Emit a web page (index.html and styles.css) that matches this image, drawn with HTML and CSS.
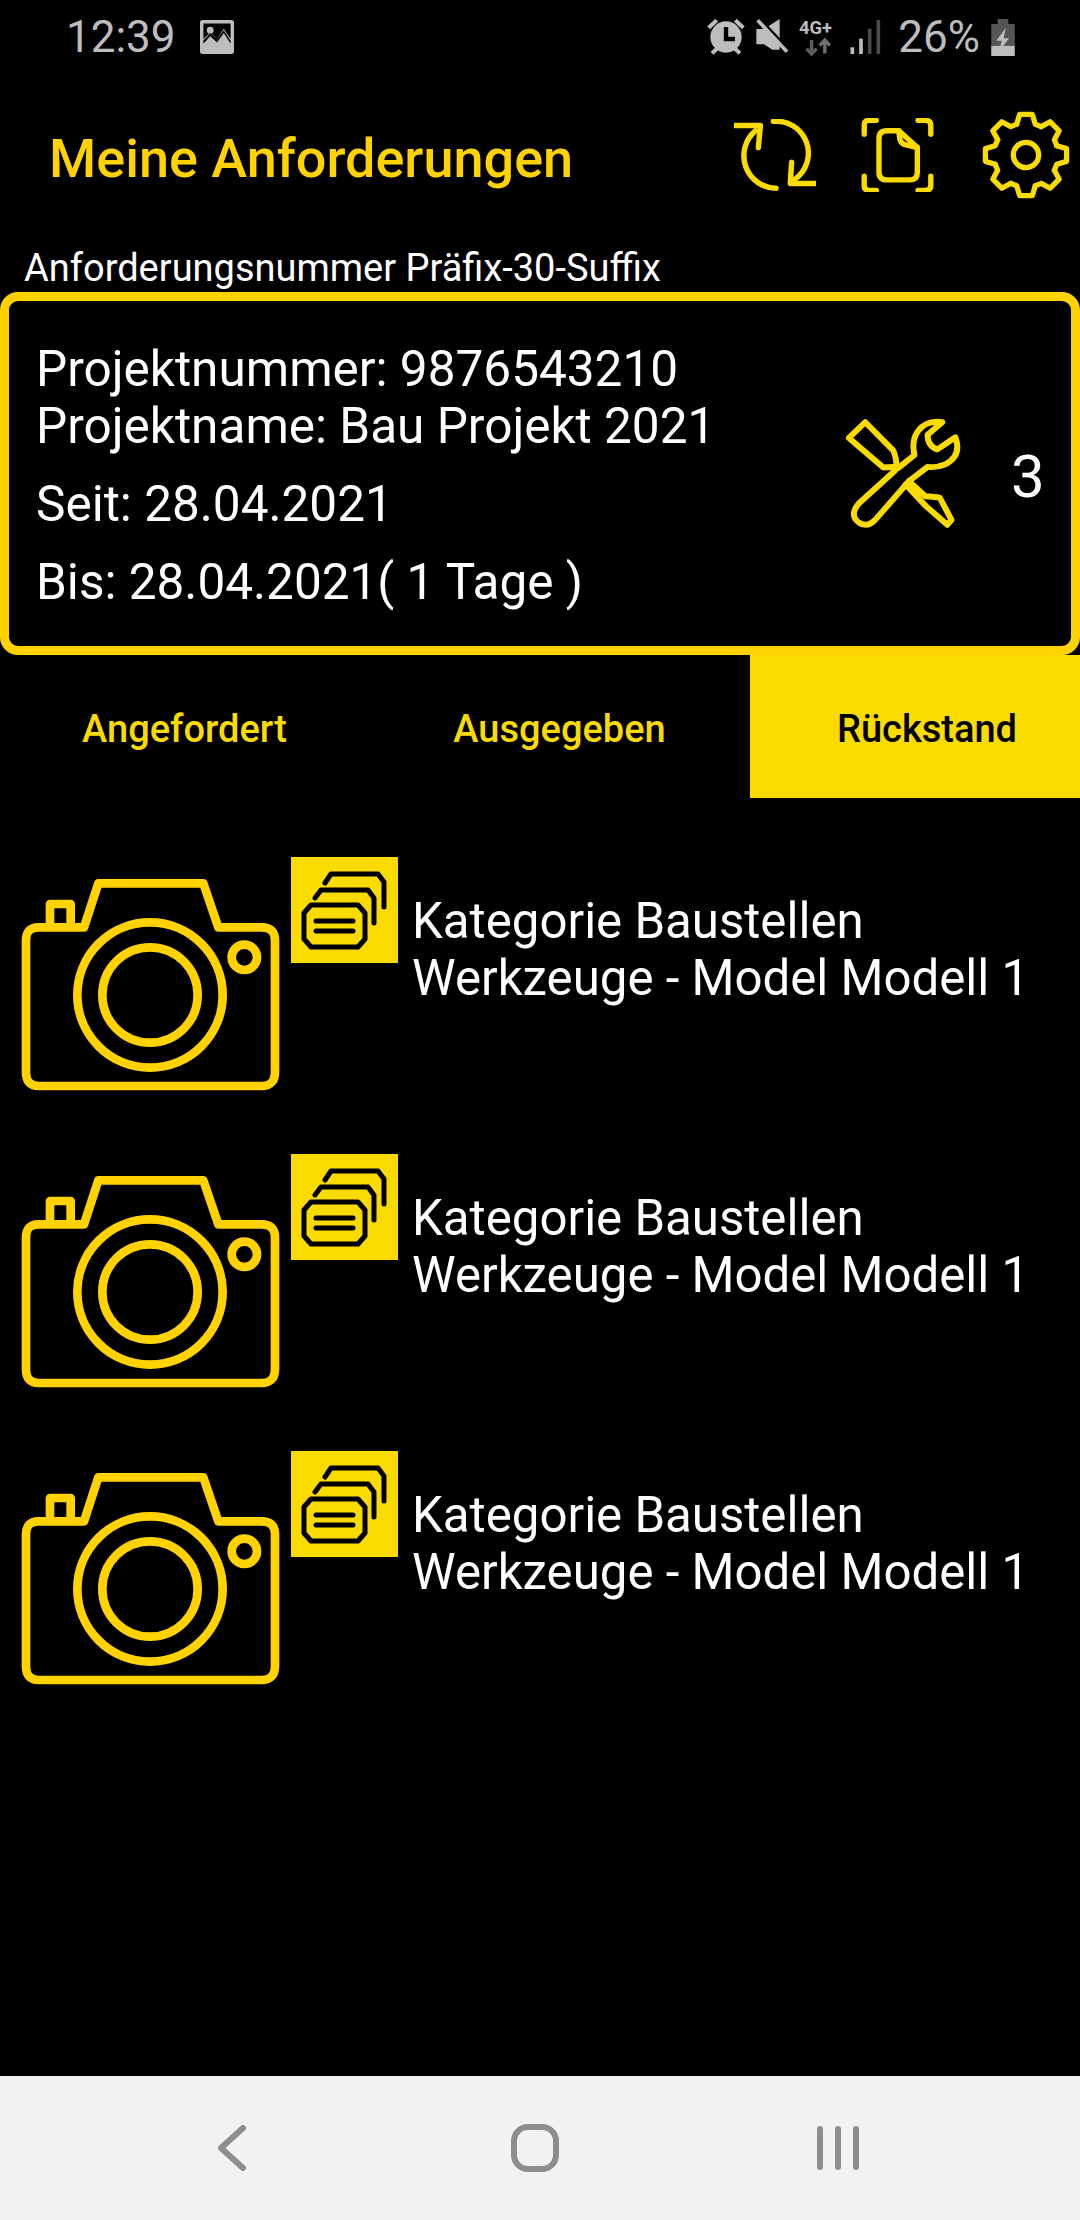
FILE: index.html
```html
<!DOCTYPE html>
<html lang="de">
<head>
    <meta charset="UTF-8">
    <meta name="viewport" content="width=device-width, initial-scale=1.0">
    <title>Meine Anforderungen</title>
    <link rel="stylesheet" href="styles.css">
</head>
<body>
    <div class="status-bar">
        <span class="status-time">12:39</span>
        <svg class="status-pic" width="34" height="34" viewBox="582 62 100 100">
            <path fill="#bdbdbd" fill-rule="evenodd" d="M590 62H674Q682 62 682 70V154Q682 162 674 162H590Q582 162 582 154V70Q582 62 590 62ZM592 72V118L612 98L632 118L652 88L672 118V72Z"/>
            <circle cx="612" cy="92" r="10" fill="#bdbdbd"/>
            <path fill="#000" d="M592 132L612 110L632 128L652 100L672 132V124L652 92L632 118L612 100L592 122Z"/>
        </svg>
        <div class="status-right">
            <svg width="38" height="36" viewBox="490 58 110 108">
                <circle cx="545" cy="112" r="47" fill="#bdbdbd"/>
                <path d="M545 82V118H572" fill="none" stroke="#000" stroke-width="13"/>
                <path d="M493 84L517 62M597 84L573 62M503 161L518 147M587 161L572 147" fill="none" stroke="#bdbdbd" stroke-width="12"/>
            </svg>
            <svg class="status-mute" width="34" height="36" viewBox="630 58 98 108">
                <path fill="#bdbdbd" d="M632 88H655L702 58V150L680 150L655 134H632Z"/>
                <path d="M646 62L728 150" stroke="#000" stroke-width="10"/>
                <path d="M636 62L724 156" stroke="#bdbdbd" stroke-width="11"/>
            </svg>
            <svg class="status-net" width="36" height="38" viewBox="757 60 104 112">
                <text class="net-label" x="756" y="106">4G+</text>
                <path d="M793 125V165M778 150L793 166L808 150" fill="none" stroke="#5c5c5c" stroke-width="10"/>
                <path d="M832 165V125M817 141L832 125L847 141" fill="none" stroke="#6e6e6e" stroke-width="10"/>
            </svg>
            <svg class="status-signal" width="31" height="34" viewBox="905 62 90 102">
                <rect x="905" y="144" width="11" height="20" fill="#bdbdbd"/>
                <rect x="931" y="118" width="11" height="46" fill="#bdbdbd"/>
                <rect x="957" y="88" width="11" height="76" fill="#4a4a4a"/>
                <rect x="983" y="62" width="11" height="102" fill="#4a4a4a"/>
            </svg>
            <span class="status-pct">26%</span>
            <svg class="status-batt" width="24" height="37" viewBox="1307 55 70 110">
                <path fill="#555" d="M1326 55H1358V70H1377V135H1307V70H1326Z"/>
                <rect x="1307" y="135" width="70" height="30" fill="#bdbdbd"/>
                <path fill="#bdbdbd" d="M1350 82L1322 120H1338L1330 152L1360 112H1344Z"/>
            </svg>
        </div>
    </div>

    <div class="app-header">
        <h1 class="app-title">Meine Anforderungen</h1>
        <svg class="head-icon refresh" width="82" height="72" viewBox="563 363 240 212">
            <path d="M678 370A94 94 0 0 1 742 540"/>
            <path d="M732 490L728 553H800"/>
            <path d="M686 567A96 96 0 0 1 625 398"/>
            <path d="M566 382H640L634 448"/>
        </svg>
        <svg class="head-icon docscan" width="73" height="74" viewBox="935 357 212 220">
            <path d="M942 405V378Q942 364 956 364H978"/>
            <path d="M1102 364H1124Q1140 364 1140 378V405"/>
            <path d="M942 530V558Q942 572 956 572H978"/>
            <path d="M1102 572H1124Q1140 572 1140 558V530"/>
            <path d="M1045 395H1010Q986 395 986 418V518Q986 541 1010 541H1078Q1100 541 1100 518V445Z"/>
            <path d="M1045 395L1048 420Q1052 434 1066 437L1100 445"/>
        </svg>
        <svg class="head-icon gear" width="90" height="90" viewBox="-46 -46 92 92">
            <defs>
                <path id="gear-tooth" d="M-9.5 -31.5L-6.5 -41.5H6.5L9.5 -31.5L15.6 -29"/>
            </defs>
            <use href="#gear-tooth"/>
            <use href="#gear-tooth" transform="rotate(45)"/>
            <use href="#gear-tooth" transform="rotate(90)"/>
            <use href="#gear-tooth" transform="rotate(135)"/>
            <use href="#gear-tooth" transform="rotate(180)"/>
            <use href="#gear-tooth" transform="rotate(225)"/>
            <use href="#gear-tooth" transform="rotate(270)"/>
            <use href="#gear-tooth" transform="rotate(315)"/>
            <circle r="13"/>
        </svg>
    </div>

    <div class="req-number">Anforderungsnummer Präfix-30-Suffix</div>

    <div class="req-card">
        <div class="req-info">
            <div class="req-project">
                <div>Projektnummer: 9876543210</div>
                <div>Projektname: Bau Projekt 2021</div>
            </div>
            <div class="req-date">Seit: 28.04.2021</div>
            <div class="req-date">Bis: 28.04.2021( 1 Tage )</div>
        </div>
        <svg class="tools-icon" width="118" height="114" viewBox="190 110 360 340">
            <path d="M255 122L340 208Q350 230 350 258L310 260L205 170Z"/>
            <path d="M388 302L438 348Q470 350 482 352L518 420L505 435L440 378L378 312"/>
            <path d="M345 270L235 370Q205 405 235 428Q260 445 285 420L390 300L445 258Q470 262 500 250Q550 225 530 168L475 205Q445 195 445 160L490 122Q440 115 415 150Q395 180 405 222L355 262"/>
        </svg>
        <span class="req-count">3</span>
    </div>

    <div class="tabs">
        <div class="tab">Angefordert</div>
        <div class="tab">Ausgegeben</div>
        <div class="tab active">Rückstand</div>
    </div>

    <div class="item-list">
        <div class="item">
            <svg class="camera-icon" width="276" height="240" viewBox="45 51 828 720">
                <path d="M252 262L295 130H610L655 262H785Q825 262 825 302V695Q825 738 785 738H115Q78 738 78 695V302Q78 262 115 262Z"/>
                <path d="M150 262V192H212V262"/>
                <circle cx="450" cy="465" r="218"/>
                <circle cx="450" cy="465" r="143"/>
                <circle cx="733" cy="352" r="38"/>
            </svg>
            <div class="item-badge">
                <svg width="107" height="106" viewBox="0 0 107 106">
                    <path d="M20 48H67L74 56V82L67 90H20L13 82V56Z"/>
                    <path d="M25 64H62M25 74H62"/>
                    <path d="M24 41L30 33H77L83 41V66"/>
                    <path d="M34 26L40 17H87L93 25V50"/>
                </svg>
            </div>
            <div class="item-text">
                <div>Kategorie Baustellen</div>
                <div>Werkzeuge - Model Modell 1</div>
            </div>
        </div>
        <div class="item">
            <svg class="camera-icon" width="276" height="240" viewBox="45 51 828 720">
                <path d="M252 262L295 130H610L655 262H785Q825 262 825 302V695Q825 738 785 738H115Q78 738 78 695V302Q78 262 115 262Z"/>
                <path d="M150 262V192H212V262"/>
                <circle cx="450" cy="465" r="218"/>
                <circle cx="450" cy="465" r="143"/>
                <circle cx="733" cy="352" r="38"/>
            </svg>
            <div class="item-badge">
                <svg width="107" height="106" viewBox="0 0 107 106">
                    <path d="M20 48H67L74 56V82L67 90H20L13 82V56Z"/>
                    <path d="M25 64H62M25 74H62"/>
                    <path d="M24 41L30 33H77L83 41V66"/>
                    <path d="M34 26L40 17H87L93 25V50"/>
                </svg>
            </div>
            <div class="item-text">
                <div>Kategorie Baustellen</div>
                <div>Werkzeuge - Model Modell 1</div>
            </div>
        </div>
        <div class="item">
            <svg class="camera-icon" width="276" height="240" viewBox="45 51 828 720">
                <path d="M252 262L295 130H610L655 262H785Q825 262 825 302V695Q825 738 785 738H115Q78 738 78 695V302Q78 262 115 262Z"/>
                <path d="M150 262V192H212V262"/>
                <circle cx="450" cy="465" r="218"/>
                <circle cx="450" cy="465" r="143"/>
                <circle cx="733" cy="352" r="38"/>
            </svg>
            <div class="item-badge">
                <svg width="107" height="106" viewBox="0 0 107 106">
                    <path d="M20 48H67L74 56V82L67 90H20L13 82V56Z"/>
                    <path d="M25 64H62M25 74H62"/>
                    <path d="M24 41L30 33H77L83 41V66"/>
                    <path d="M34 26L40 17H87L93 25V50"/>
                </svg>
            </div>
            <div class="item-text">
                <div>Kategorie Baustellen</div>
                <div>Werkzeuge - Model Modell 1</div>
            </div>
        </div>
    </div>

    <div class="nav-bar">
        <div class="nav-btn">
            <svg width="28" height="46" viewBox="0 0 28 46"><path d="M25 3L3 23L25 43"/></svg>
        </div>
        <div class="nav-btn">
            <svg width="48" height="48" viewBox="0 0 48 48"><rect x="3" y="3" width="42" height="42" rx="14"/></svg>
        </div>
        <div class="nav-btn">
            <svg width="42" height="44" viewBox="0 0 42 44"><path d="M3 3V41M21 3V41M39 3V41"/></svg>
        </div>
    </div>
</body>
</html>
```

FILE: styles.css
```css
* {
    box-sizing: border-box;
}
html, body {
    margin: 0;
    padding: 0;
}
body {
    width: 1080px;
    height: 2220px;
    background: #000;
    color: #fff;
    font-family: Roboto, sans-serif;
    display: flex;
    flex-direction: column;
    overflow: hidden;
}
svg {
    display: block;
    flex: none;
}

/* status bar */
.status-bar {
    height: 74px;
    display: flex;
    align-items: center;
    padding: 0 65px 0 66px;
    color: #bdbdbd;
    font-size: 44px;
}
.status-pic {
    margin-left: 24px;
}
.status-right {
    margin-left: auto;
    display: flex;
    align-items: center;
}
.status-mute {
    margin-left: 10px;
}
.status-net {
    margin-left: 10px;
}
.net-label {
    font-family: Roboto, sans-serif;
    font-size: 54px;
    font-weight: 700;
    fill: #bdbdbd;
}
.status-signal {
    margin-left: 15px;
}
.status-pct {
    margin-left: 17px;
}
.status-batt {
    margin-left: 11px;
}

/* header */
.app-header {
    height: 162px;
    display: flex;
    align-items: center;
    padding: 0 9px 0 49px;
}
.app-title {
    margin: 6px auto 0 0;
    color: #ffd200;
    font-size: 54px;
    font-weight: 500;
}
.head-icon {
    fill: none;
    stroke: #fadb00;
    stroke-linecap: round;
    stroke-linejoin: round;
}
.refresh, .docscan {
    stroke-width: 16px;
}
.gear {
    stroke-width: 5.4px;
}
.docscan {
    margin-left: 45px;
}
.gear {
    margin-left: 47px;
}

.req-number {
    height: 56px;
    padding: 7px 0 0 24px;
    font-size: 38px;
    line-height: 50px;
}

/* card */
.req-card {
    height: 363px;
    border: 9px solid #ffd200;
    border-radius: 18px;
    display: flex;
    align-items: center;
    padding: 5px 27px 0;
}
.req-info {
    flex: 1;
    font-size: 49.5px;
    line-height: 57px;
}
.req-date {
    margin-top: 21px;
}
.tools-icon {
    fill: none;
    stroke: #fadb00;
    stroke-width: 18px;
    stroke-linejoin: round;
    stroke-linecap: round;
    margin-top: -5px;
}
.req-count {
    width: 33px;
    margin-left: 49px;
    font-size: 60px;
}

/* tabs */
.tabs {
    height: 143px;
    display: grid;
    grid-template-columns: 375px 375px 330px;
}
.tab {
    display: flex;
    align-items: center;
    justify-content: center;
    padding: 5px 6px 0 0;
    color: #fadb00;
    font-size: 38px;
    font-weight: 500;
}
.tab.active {
    background: #fadb00;
    color: #000;
    padding: 5px 0 0 24px;
}

/* list */
.item-list {
    flex: 1;
    padding-top: 59px;
}
.item {
    height: 297px;
    padding-left: 15px;
    display: flex;
    align-items: flex-start;
}
.camera-icon {
    fill: none;
    stroke: #ffd200;
    stroke-width: 26px;
    stroke-linejoin: round;
}
.item-badge {
    width: 107px;
    height: 106px;
    background: #fadb00;
}
.item-badge svg {
    fill: none;
    stroke: #000;
    stroke-width: 5px;
    stroke-linecap: round;
    stroke-linejoin: round;
}
.item-text {
    margin: 36px 0 0 14px;
    font-size: 49.2px;
    line-height: 57px;
}

/* android nav */
.nav-bar {
    height: 144px;
    background: #f2f2f2;
    display: flex;
    align-items: center;
    justify-content: center;
    padding-right: 10px;
}
.nav-btn {
    width: 303px;
    display: flex;
    justify-content: center;
}
.nav-btn svg {
    fill: none;
    stroke: #8e8e8e;
    stroke-width: 6px;
    stroke-linecap: round;
    stroke-linejoin: round;
}
```
